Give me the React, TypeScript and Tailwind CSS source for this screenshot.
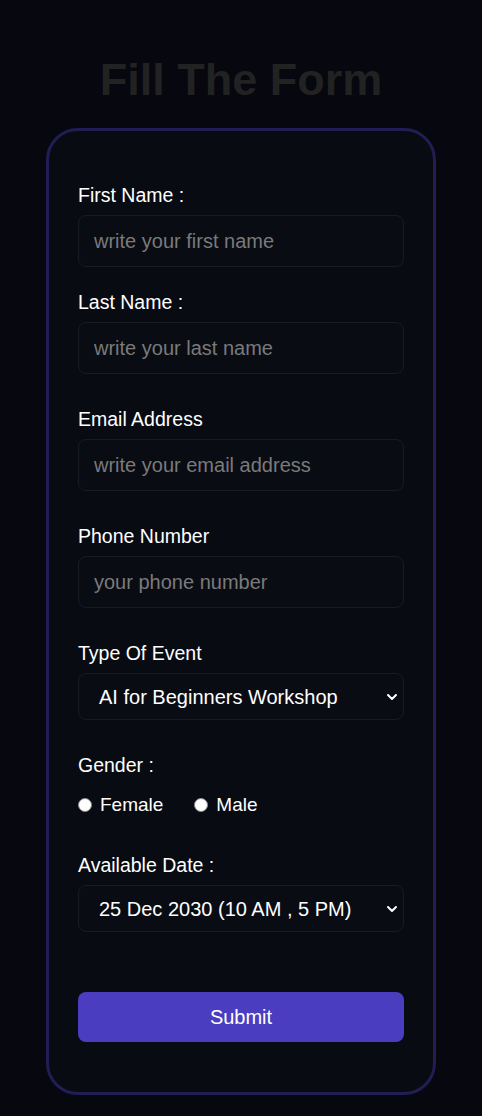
import React from "react";

const font = { fontFamily: '"Liberation Sans", Arial, sans-serif' };

function Label({ children, className = "" }: { children: React.ReactNode; className?: string }) {
  return (
    <label className={`block text-[19.5px] leading-[22px] text-white ${className}`}>{children}</label>
  );
}

function TextInput({ placeholder }: { placeholder: string }) {
  return (
    <input
      type="text"
      placeholder={placeholder}
      className="mt-[9px] block h-[52px] w-full rounded-[8px] border border-[#1a1b22] bg-[#0a0c14] pl-[15px] text-[20px] text-white outline-none placeholder:text-[#7a7a7a]"
      style={font}
    />
  );
}

function Select({ value }: { value: string }) {
  return (
    <div className="relative mt-[9px] h-[47px] w-full rounded-[8px] border border-[#1a1b22] bg-[#0a0c14]">
      <div className="flex h-full items-center pl-[20px] text-[20px] text-white">{value}</div>
      <svg
        className="absolute right-[5px] top-1/2 -translate-y-1/2"
        width="12"
        height="8"
        viewBox="0 0 12 8"
        fill="none"
      >
        <path d="M2 2l4 4 4-4" stroke="#ffffff" strokeWidth="2" strokeLinecap="round" strokeLinejoin="round" />
      </svg>
    </div>
  );
}

function Radio({ label }: { label: string }) {
  return (
    <div className="flex items-center">
      <span className="block h-[14px] w-[14px] rounded-full border border-[#8a8a8a] bg-white" />
      <span className="ml-[8px] text-[19px] leading-[22px] text-white">{label}</span>
    </div>
  );
}

export default function App() {
  return (
    <div className="min-h-[1116px] w-full bg-[#06070f] pt-[54px]" style={font}>
      <h1 className="text-center text-[45px] font-bold leading-[52px] text-[#222222]">Fill The Form</h1>
      <div className="mx-auto mt-[22px] w-[390px] rounded-[32px] border-[3px] border-[#221d54] bg-[#090b13] px-[29px] pb-[50px] pt-[53px]">
        <Label>First Name :</Label>
        <TextInput placeholder="write your first name" />

        <Label className="mt-[24px]">Last Name :</Label>
        <TextInput placeholder="write your last name" />

        <Label className="mt-[34px]">Email Address</Label>
        <TextInput placeholder="write your email address" />

        <Label className="mt-[34px]">Phone Number</Label>
        <TextInput placeholder="your phone number" />

        <Label className="mt-[34px]">Type Of Event</Label>
        <Select value="AI for Beginners Workshop" />

        <Label className="mt-[34px]">Gender :</Label>
        <div className="mt-[18px] flex items-center gap-[31px]">
          <Radio label="Female" />
          <Radio label="Male" />
        </div>

        <Label className="mt-[38px]">Available Date :</Label>
        <Select value="25 Dec 2030 (10 AM , 5 PM)" />

        <button className="mt-[60px] flex h-[50px] w-full items-center justify-center rounded-[8px] bg-[#4a3dbf] text-[20px] text-white">
          Submit
        </button>
      </div>
    </div>
  );
}
